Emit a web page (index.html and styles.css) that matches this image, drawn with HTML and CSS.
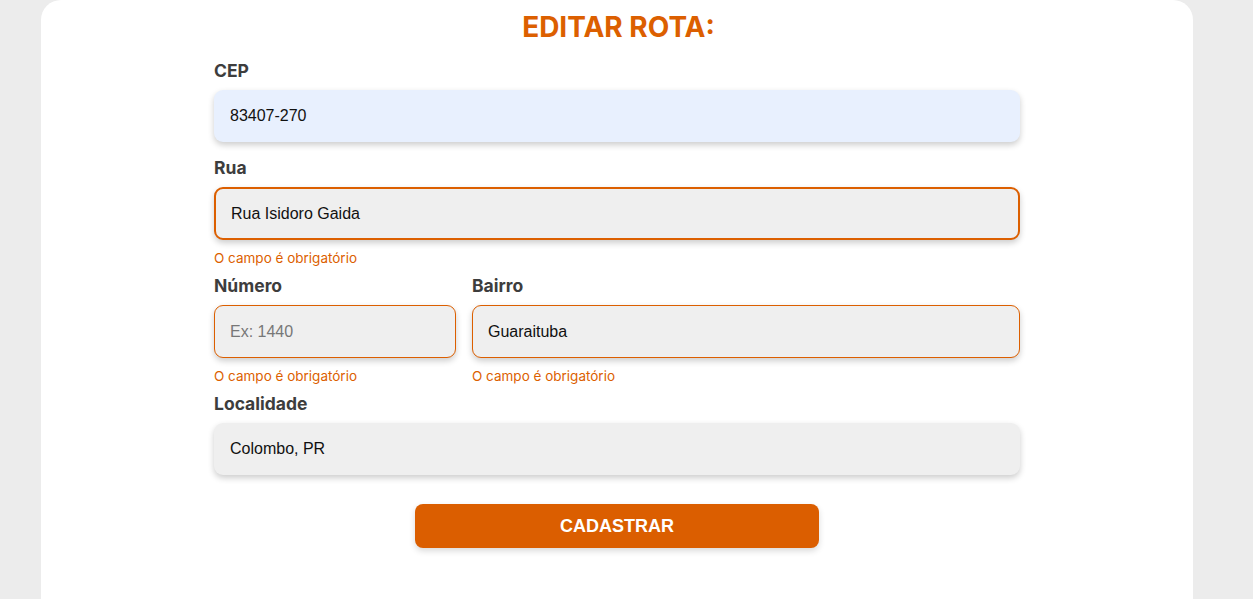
FILE: index.html
```html
<!DOCTYPE html>
<html lang="pt-BR">
<head>
<meta charset="utf-8">
<title>Editar Rota</title>
<link rel="stylesheet" href="styles.css">
</head>
<body>
<main class="card">
  <h1 class="title">EDITAR ROTA:</h1>
  <form class="form">
    <div class="field">
      <label class="label">CEP</label>
      <input class="input autofill" type="text" value="83407-270">
    </div>
    <div class="field">
      <label class="label">Rua</label>
      <input class="input focused" type="text" value="Rua Isidoro Gaida" spellcheck="false">
      <span class="error">O campo é obrigatório</span>
    </div>
    <div class="row">
      <div class="field num">
        <label class="label">Número</label>
        <input class="input invalid" type="text" placeholder="Ex: 1440">
        <span class="error">O campo é obrigatório</span>
      </div>
      <div class="field grow">
        <label class="label">Bairro</label>
        <input class="input invalid" type="text" value="Guaraituba">
        <span class="error">O campo é obrigatório</span>
      </div>
    </div>
    <div class="field">
      <label class="label">Localidade</label>
      <input class="input" type="text" value="Colombo, PR">
    </div>
    <div class="actions">
      <button class="btn" type="button">CADASTRAR</button>
    </div>
  </form>
</main>
</body>
</html>
```

FILE: styles.css
```css
* { box-sizing: border-box; }
html, body { margin: 0; padding: 0; }
body {
  background: #ececec;
  font-family: Inter, "Noto Sans", sans-serif;
  height: 599px;
  overflow: hidden;
}
.card {
  margin: 0 60px 0 41px;
  background: #fff;
  border-radius: 20px 20px 0 0;
  height: 599px;
  padding-top: 8px;
}
.title {
  margin: 0 0 -1px;
  text-align: center;
  color: #dc5f00;
  font-family: Inter, sans-serif;
  font-weight: 700;
  font-size: 28px;
  line-height: 38px;
  padding-left: 3px;
}
.form {
  width: 806px;
  margin: 0 auto 0 173px;
  display: flex;
  flex-direction: column;
}
.field {
  display: flex;
  flex-direction: column;
}
.label {
  font-weight: 700;
  font-size: 17.5px;
  color: #3d3d3d;
  line-height: 24px;
  margin-top: 14px;
  margin-bottom: 7px;
}
.input {
  height: 52px;
  border: 1px solid transparent;
  border-radius: 9px;
  background: #efefef;
  font-family: "Liberation Sans", Arial, sans-serif;
  font-size: 16px;
  color: #111;
  padding: 0 15px;
  box-shadow: 0 3px 6px rgba(0,0,0,0.2);
  outline: none;
}
.input::placeholder { color: #777; }
.autofill { background: #e8f0fe; }
.focused {
  border: 2px solid #dc5f00;
  height: 53px;
}
.invalid { border: 1px solid #dc5f00; height: 53px; }
.error {
  color: #dc5f00;
  font-size: 13.5px;
  line-height: 18px;
  margin-top: 9px;
  margin-bottom: -7px;
}
.row {
  display: flex;
  gap: 16px;
}
.num { width: 242px; }
.grow { flex: 1; }
.actions {
  display: flex;
  justify-content: center;
  margin-top: 29px;
}
.btn {
  width: 404px;
  height: 44px;
  border: none;
  border-radius: 8px;
  background: #db5e00;
  color: #fff;
  font-family: "Liberation Sans", Arial, sans-serif;
  font-weight: 700;
  font-size: 18px;
  box-shadow: 0 3px 6px rgba(0,0,0,0.15);
}
```
